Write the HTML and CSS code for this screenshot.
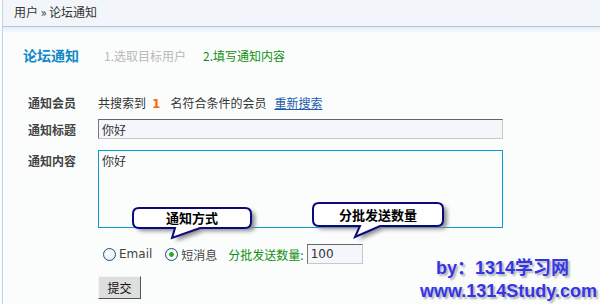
FILE: index.html
```html
<!DOCTYPE html>
<html lang="zh-CN">
<head>
<meta charset="utf-8">
<title>论坛通知</title>
<link rel="stylesheet" href="styles.css">
</head>
<body>
<div class="page">
  <div class="crumb">用户 &raquo; 论坛通知</div>
  <div class="band"></div>
  <div class="main">
    <div class="steps">
      <span class="title">论坛通知</span>
      <span class="step done">1.选取目标用户</span>
      <span class="step cur">2.填写通知内容</span>
    </div>
    <div class="row r1">
      <span class="label">通知会员</span>
      <span class="val">共搜索到<b class="num">1</b>名符合条件的会员<a class="link" href="#">重新搜索</a></span>
    </div>
    <div class="row r2">
      <span class="label">通知标题</span>
      <input class="ipt" type="text" value="你好">
    </div>
    <div class="row r3">
      <span class="label">通知内容</span>
      <textarea class="ta">你好</textarea>
    </div>
    <div class="row r4">
      <span class="label"></span>
      <span class="opts">
        <label class="opt"><input class="radio" type="radio" name="m">Email</label>
        <label class="opt"><input class="radio" type="radio" name="m" checked>短消息</label>
        <span class="batch">分批发送数量:</span><input class="ipt small" type="text" value="100">
      </span>
    </div>
    <div class="row r5">
      <span class="label"></span>
      <button class="btn" type="button">提交</button>
    </div>
  </div>

  <div class="callout c1">
    <svg width="132" height="44" viewBox="0 0 132 44">
      <defs><filter id="f1" x="-20%" y="-40%" width="140%" height="180%"><feGaussianBlur stdDeviation="2"/></filter></defs>
      <path d="M8 2H114Q120 2 120 8V16Q120 22 114 22H69L41 32L44 22H8Q2 22 2 16V8Q2 2 8 2Z" fill="#8a8a8a" transform="translate(4 3)" filter="url(#f1)"/>
      <path d="M8 2H114Q120 2 120 8V16Q120 22 114 22H69L41 32L44 22H8Q2 22 2 16V8Q2 2 8 2Z" fill="#ffffff" stroke="#0a0a80" stroke-width="2"/>
    </svg>
    <span class="ctext t1">通知方式</span>
  </div>

  <div class="callout c2">
    <svg width="144" height="46" viewBox="0 0 144 46">
      <defs><filter id="f2" x="-20%" y="-40%" width="140%" height="180%"><feGaussianBlur stdDeviation="2"/></filter></defs>
      <path d="M8 2H126Q132 2 132 8V19Q132 25 126 25H69L44 36L49 25H8Q2 25 2 19V8Q2 2 8 2Z" fill="#8a8a8a" transform="translate(4 3)" filter="url(#f2)"/>
      <path d="M8 2H126Q132 2 132 8V19Q132 25 126 25H69L44 36L49 25H8Q2 25 2 19V8Q2 2 8 2Z" fill="#ffffff" stroke="#0a0a80" stroke-width="2"/>
    </svg>
    <span class="ctext t2">分批发送数量</span>
  </div>

  <div class="mark">
    <div>by：1314学习网</div>
    <div>www.1314Study.com</div>
  </div>
</div>
</body>
</html>
```

FILE: styles.css
```css
html, body {
  margin: 0;
  padding: 0;
  background: #fbfdfd;
}
body {
  width: 600px;
  height: 304px;
  overflow: hidden;
  font-family: "Noto Sans CJK SC", "DejaVu Sans", sans-serif;
  font-size: 12px;
  color: #333;
}
.page {
  position: relative;
  margin-left: 2px;
  height: 304px;
  border-left: 1px solid #bcd6e8;
}
.crumb {
  height: 26px;
  line-height: 24px;
  padding-left: 11px;
  background: #f2f6fa;
  border-bottom: 1px solid #a9c9d9;
  color: #333;
}
.band {
  height: 5px;
  background: linear-gradient(#e6eff7, #f4f8fb);
}
.main {
  padding-left: 20px;
}
.steps {
  display: flex;
  align-items: center;
  height: 20px;
  margin-top: 13px;
}
.title {
  font-size: 14px;
  font-weight: bold;
  color: #1289c6;
  width: 81px;
}
.step {
  margin-right: 17px;
}
.step.done { color: #b8b8b8; }
.step.cur { color: #109010; }
.row {
  display: flex;
  align-items: center;
}
.label {
  width: 70px;
  padding-left: 5px;
  font-weight: bold;
  color: #444;
  flex: none;
}
.r1 {
  margin-top: 28px;
  height: 18px;
}
.num {
  color: #ff6600;
  font-family: "DejaVu Sans", sans-serif;
  margin: 0 10px 0 6px;
}
.link {
  color: #1a5aa8;
  margin-left: 8px;
}
.r2 {
  margin-top: 8px;
}
.ipt {
  box-sizing: border-box;
  width: 405px;
  height: 20px;
  margin: 0;
  padding: 0 3px;
  background: #f3f6fa;
  border: 1px solid #c8c8c8;
  border-top-color: #666;
  border-left-color: #777;
  font-family: "Noto Sans CJK SC", sans-serif;
  font-size: 12px;
  color: #333;
}
.r3 {
  margin-top: 11px;
  align-items: flex-start;
}
.r3 .label {
  margin-top: 2px;
}
.ta {
  box-sizing: border-box;
  width: 405px;
  height: 78px;
  margin: 0;
  padding: 1px 3px;
  border: 1px solid #0e9ad0;
  background: #fbfdfd;
  font-family: "Noto Sans CJK SC", sans-serif;
  font-size: 12px;
  color: #333;
  resize: none;
}
.r4 {
  margin-top: 16px;
  height: 20px;
}
.opts {
  display: flex;
  align-items: center;
  margin-left: 5px;
}
.opt {
  display: flex;
  align-items: center;
  margin-right: 13px;
  color: #444;
  font-family: "DejaVu Sans", "Noto Sans CJK SC", sans-serif;
}
.opt:nth-child(2) { margin-right: 11px; }
.radio {
  appearance: none;
  -webkit-appearance: none;
  width: 13px;
  height: 13px;
  margin: 0 3px 0 0;
  border: 1px solid #1c4f7c;
  border-radius: 50%;
  background: radial-gradient(circle at 40% 40%, #ffffff, #dfe6ee);
  box-sizing: border-box;
}
.radio:checked {
  background: radial-gradient(circle, #22aa22 0, #22aa22 2px, #ffffff 2.6px, #dfe6ee);
}
.batch {
  color: #109010;
}
.ipt.small {
  width: 56px;
  margin-left: 3px;
  font-family: "DejaVu Sans", sans-serif;
}
.r5 {
  margin-top: 12px;
}
.btn {
  width: 43px;
  height: 23px;
  margin: 0;
  padding: 0;
  background: #dedede;
  border: 1px solid;
  border-color: #f4f4f4 #555 #555 #f4f4f4;
  font-family: "Noto Sans CJK SC", sans-serif;
  font-size: 12px;
  color: #111;
}
.callout {
  position: absolute;
}
.callout svg {
  display: block;
}
.c1 { left: 128px; top: 206px; }
.c2 { left: 308px; top: 201px; }
.ctext {
  position: absolute;
  top: 2px;
  font-size: 13px;
  font-weight: bold;
  color: #000;
  text-align: center;
  line-height: 20px;
}
.t1 { left: 2px; width: 118px; }
.t2 { left: 2px; width: 130px; line-height: 23px; }
.mark {
  position: absolute;
  right: 3px;
  bottom: 1px;
  text-align: right;
  font-family: "Liberation Sans", "Noto Sans CJK SC", sans-serif;
  font-weight: bold;
  font-size: 18px;
  line-height: 23px;
  color: #3535e8;
  text-shadow: 2px 2px 2px #b0b0b0;
}
.mark div:first-child {
  margin-right: 28px;
}
```
